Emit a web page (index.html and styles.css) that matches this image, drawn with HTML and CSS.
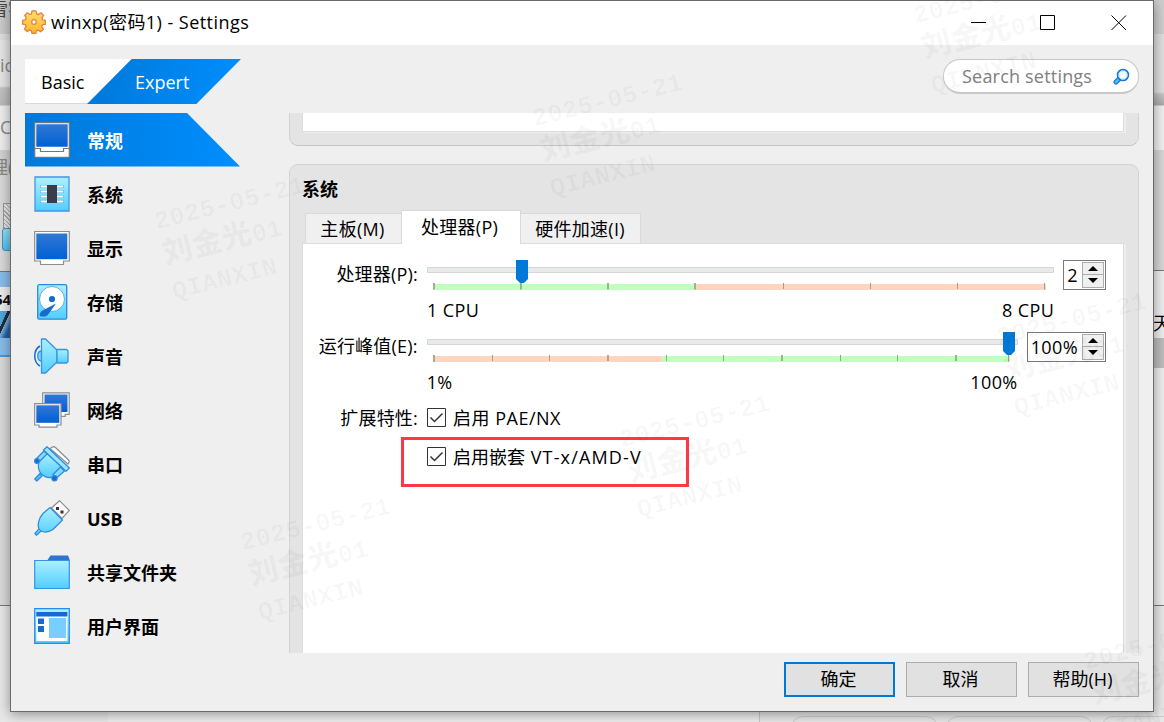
FILE: index.html
```html
<!DOCTYPE html>
<html lang="zh-CN">
<head>
    <meta charset="UTF-8">
    <meta name="viewport" content="width=device-width, initial-scale=1.0">
    <title>winxp(密码1) - Settings</title>
    <link rel="stylesheet" href="styles.css">
</head>
<body>
    <!-- windows behind the dialog -->
    <div class="back back-left">
        <span class="bt bt-1">雪字</span>
        <span class="bt bt-2">ic</span>
        <span class="bt bt-3">C</span>
        <span class="bt bt-4">理(</span>
        <div class="back-hatch"></div>
        <div class="back-cube"></div>
        <div class="back-sel"></div>
        <div class="back-logo"></div>
        <span class="bt bt-5">64</span>
    </div>
    <div class="back back-right">
        <span class="bt bt-6">天</span>
        <div class="back-gray"></div>
    </div>
    <div class="back-bottom"></div>
    <div class="back-pill pill-1"></div>
    <div class="back-pill pill-2"></div>
    <div class="back-pill pill-3"></div>

    <div class="window">
        <div class="titlebar">
            <svg class="gear" width="24" height="24" viewBox="0 0 24 24">
                <defs>
                    <linearGradient id="gold" x1="0" y1="0" x2="0" y2="1"><stop offset="0" stop-color="#ffdf70"/><stop offset="1" stop-color="#ffb52c"/></linearGradient>
                    <linearGradient id="blue" x1="0" y1="0" x2="0" y2="1"><stop offset="0" stop-color="#3078d4"/><stop offset="1" stop-color="#0060d4"/></linearGradient>
                    <linearGradient id="sky" x1="0" y1="0" x2="0" y2="1"><stop offset="0" stop-color="#acf0ff"/><stop offset="1" stop-color="#50ceff"/></linearGradient>
                </defs>
                <path d="M10 .8h4l.6 3 1.8.8 2.6-1.8 2.6 2.700-1.700 2.600.7 1.800 2.800.5v3.800l-2.900.6-.8 1.900 1.700 2.500-2.700 2.600-2.500-1.700-1.800.8-.6 2.600h-3.800l-.6-2.800-1.900-.8-2.500 1.700-2.600-2.600 1.700-2.500-.8-1.900-2.700-.5v-3.800l2.900-.6.8-1.800L2.700 5.400l2.600-2.600 2.500 1.700 1.700-.7z" fill="url(#gold)" stroke="#e8823a" stroke-width="1.300" stroke-linejoin="round"/>
                <circle cx="12" cy="12" r="2.300" fill="#fff" stroke="#d98a4a" stroke-width="1.300"/>
            </svg>
            <span class="title">winxp(密码1) - Settings</span>
            <svg class="controls" width="158" height="16" viewBox="0 0 158 16" fill="none" stroke="#000">
                <path d="M0 8.500h15M69.500 1.500h14v14h-14zM140.500 1.500l14.500 14.500M155 1.500l-14.500 14.500"/>
            </svg>
        </div>

        <div class="client">
            <div class="toolbar">
                <div class="modes">
                    <span class="mode basic">Basic</span>
                    <span class="mode expert">Expert</span>
                </div>
                <div class="search">
                    <span>Search settings</span>
                    <svg width="17" height="17" viewBox="0 0 17 17">
                        <path d="M6.300 10.700L3 14" stroke="#1976d8" stroke-width="5" stroke-linecap="round"/>
                        <path d="M6.300 10.700L3 14" stroke="#50b8fa" stroke-width="2.600" stroke-linecap="round"/>
                        <circle cx="10" cy="7" r="5.400" fill="#f4fcff" stroke="#1976d8" stroke-width="1.800"/>
                        <circle cx="10" cy="7" r="4.100" fill="none" stroke="#a4e4ff"/>
                    </svg>
                </div>
            </div>

            <div class="main">
                <div class="sidebar">
                    <div class="item active">
                        <svg width="36" height="36" viewBox="0 0 36 36">
                            <path d="M.7.700h34.600v34.600H.7z" fill="#fff" stroke="#777" stroke-width="1.200"/>
                            <path d="M2.300 2.300h31.400v22.500H2.300z" fill="url(#blue)"/>
                            <path d="M1 26.500h5.500v3h23v-3H35" fill="none" stroke="#777" stroke-width="1.200"/>
                        </svg>
                        <span>常规</span>
                    </div>
                    <div class="item">
                        <svg width="36" height="36" viewBox="0 0 36 36">
                            <path d="M1 1h34v34H1z" fill="url(#sky)" stroke="#4795df" stroke-width="1.300"/>
                            <path d="M7.500 10.500h21M7.500 15.500h21M7.500 20.500h21M7.500 25.500h21" stroke="#5fa9d0" stroke-width="3" stroke-linecap="round"/>
                            <path d="M7.500 10.500h21M7.500 15.500h21M7.500 20.500h21M7.500 25.500h21" stroke="#fff" stroke-width="1.800" stroke-linecap="round"/>
                            <path d="M13 9h10v18H13z" fill="#383d49"/>
                        </svg>
                        <span>系统</span>
                    </div>
                    <div class="item">
                        <svg width="36" height="36" viewBox="0 0 36 36">
                            <path d="M.7 1.500h34.600v29.500h-5.800v3.500h-23V31H.7z" fill="#fff" stroke="#8c8c8c" stroke-width="1.200"/>
                            <path d="M2.300 3.500h31v25.700h-31z" fill="url(#blue)"/>
                        </svg>
                        <span>显示</span>
                    </div>
                    <div class="item">
                        <svg width="36" height="36" viewBox="0 0 36 36">
                            <rect x="3.700" y=".7" width="29" height="34.500" rx="1.500" fill="url(#sky)" stroke="#2f88dc" stroke-width="1.300"/>
                            <circle cx="18" cy="15" r="12.500" fill="#fff" stroke="#5aaee8" stroke-width="1"/>
                            <circle cx="18" cy="15" r="3.100" fill="#126dd1"/>
                            <path d="M22 19.500L8.500 26.500c-4 3-3.500 6.500 0 6 2.500.3 4.500-.5 6-2.500z" fill="#176bd0"/>
                        </svg>
                        <span>存储</span>
                    </div>
                    <div class="item">
                        <svg width="36" height="36" viewBox="0 0 36 36" stroke="#3794df" stroke-width="1.300">
                            <path d="M7.500 13c-5 0-5 10 0 10z" fill="#79d9fc"/>
                            <path d="M6 8C-1 12-1 24 6 28" fill="none" stroke="#176bd0" stroke-width="1.500"/>
                            <path d="M7.500 1h4L23 12v12L11.500 35h-4z" fill="url(#sky)"/>
                            <path d="M23 11.500h9.500l1.500 1.500v10.500l-1.500 1.500H23z" fill="url(#sky)"/>
                        </svg>
                        <span>声音</span>
                    </div>
                    <div class="item">
                        <svg width="36" height="36" viewBox="0 0 36 36">
                            <path d="M8.700.8h26.500v21.500h-4v2H8.700z" fill="#fff" stroke="#8c8c8c" stroke-width="1.200"/>
                            <path d="M10.500 2.500H33.500V20H10.500z" fill="url(#blue)"/>
                            <path d="M.7 11.700h26.300V33h-4v2.200H5V33H.7z" fill="#fff" stroke="#8c8c8c" stroke-width="1.200"/>
                            <path d="M2.300 13.300h23v17.500h-23z" fill="url(#blue)"/>
                        </svg>
                        <span>网络</span>
                    </div>
                    <div class="item">
                        <svg width="36" height="36" viewBox="0 0 36 36" stroke="#2e88df" stroke-width="1.200" stroke-linejoin="round">
                            <path d="M16 2.500l3-1.800c1 0 2 .3 3 1.300L34.500 14c1 1 .8 2.500-.5 4z" fill="#fff" stroke="#8c8c8c"/>
                            <path d="M6 27.500L.8 33l2 2L8 30z" fill="#50c8fa"/>
                            <path d="M12.500 7L5 14.500c-1.500 6-1 9.500 2 13 4 4 9 5 14 3L29 22z" fill="url(#sky)"/>
                            <path d="M10 5L2.500 12.500l3 3L13 8zM26.500 21L19 28.500l3.500 3.500L30.500 25z" fill="#84dafa"/>
                            <path d="M9.500 4L13 .7 35.300 22 32 25.300z" fill="#9ae6ff"/>
                            <circle cx="3" cy="15" r="2.400" fill="#176bd0"/><circle cx="20.500" cy="32.300" r="2.600" fill="#176bd0"/>
                        </svg>
                        <span>串口</span>
                    </div>
                    <div class="item">
                        <svg width="36" height="36" viewBox="0 0 36 36">
                            <path d="M17.500 8L25.500.7 35.300 10.500 28 18.500z" fill="#fff" stroke="#8c8c8c" stroke-width="1.200"/>
                            <path d="M22 7h3v3h-3zM26.500 10.500h3v3h-3z" fill="#333"/>
                            <path d="M16 7.500L28.500 20 19 29.500C15 32 10 32.500 7 31L2.500 35.300.8 33.500 5 29c-2-4 0-11 4-15.500z" fill="url(#sky)" stroke="#2e88df" stroke-width="1.200"/>
                            <path d="M5 29l2.500 2" stroke="#2e88df"/>
                        </svg>
                        <span>USB</span>
                    </div>
                    <div class="item">
                        <svg width="36" height="36" viewBox="0 0 36 36">
                            <path d="M13.500 6l3-4.500h17.500L35.500 5v2h-22z" fill="#2e75d2"/>
                            <path d="M.7 6.500h34.600v28H.7z" fill="url(#sky)" stroke="#3793e6" stroke-width="1.200"/>
                        </svg>
                        <span>共享文件夹</span>
                    </div>
                    <div class="item">
                        <svg width="36" height="36" viewBox="0 0 36 36">
                            <path d="M.7.700h34.600v34.600H.7z" fill="url(#sky)" stroke="#238be8" stroke-width="1.200"/>
                            <path d="M2.300 8h31v25h-31z" fill="#fff"/>
                            <path d="M2.300 4h31v4.500h-31zM4 10.500h6v5.500H4zM4 18h6v6H4z" fill="#146bd2"/>
                            <path d="M15 10h17v20H15z" fill="#78cfff"/>
                        </svg>
                        <span>用户界面</span>
                    </div>
                </div>

                <div class="scroll-area">
                    <div class="group group-prev">
                        <div class="pane pane-prev"></div>
                    </div>
                    <div class="group group-system">
                        <div class="group-title">系统</div>
                        <div class="tabs">
                            <span class="tab tab-board">主板(M)</span>
                            <span class="tab tab-cpu selected">处理器(P)</span>
                            <span class="tab tab-accel">硬件加速(I)</span>
                        </div>
                        <div class="pane">
                            <div class="row">
                                <span class="label">处理器(P):</span>
                                <div class="slider">
                                    <svg width="627" height="32" viewBox="0 0 627 32">
                                        <path d="M.5 7.500h626v5H.5z" fill="#e7eaea" stroke="#d6d6d6"/>
                                        <path d="M6 24h263v6H6z" fill="#c1ffc1"/>
                                        <path d="M269 24h350v6H269z" fill="#ffd5c1"/>
                                        <path d="M7 23v6.500M94 23v6.500M181 23v6.500M268 23v6.500" stroke="#a0a08c" stroke-width="1.700"/>
                                        <path d="M356.500 23v6M443.500 23v6M530.500 23v6M617.500 23v6.500" stroke="#a0a08c"/>
                                        <path d="M89 0h12v19l-4 4h-4l-4-4z" fill="#0078d7"/>
                                    </svg>
                                    <div class="range"><span>1 CPU</span><span>8 CPU</span></div>
                                </div>
                                <div class="spin">
                                    <span>2</span>
                                    <div class="arrows"><i class="up"></i><i class="down"></i></div>
                                </div>
                            </div>
                            <div class="row">
                                <span class="label">运行峰值(E):</span>
                                <div class="slider">
                                    <svg width="591" height="32" viewBox="0 0 591 32">
                                        <path d="M.5 7.500h590v5H.5z" fill="#e7eaea" stroke="#d6d6d6"/>
                                        <path d="M6 24h229v6H6z" fill="#ffd5c1"/>
                                        <path d="M235 24h348v6H235z" fill="#c1ffc1"/>
                                        <path d="M7 23v7M181 23v6M355 23v6M529 23v6" stroke="#a0a08c" stroke-width="1.700"/>
                                        <path d="M65.500 23v6M122.500 23v6M239.500 23v6M296.500 23v6M413.500 23v6M470.500 23v6M581.500 23v6.500" stroke="#a0a08c"/>
                                        <path d="M576 0h12v19l-4 4h-4l-4-4z" fill="#0078d7"/>
                                    </svg>
                                    <div class="range"><span>1%</span><span>100%</span></div>
                                </div>
                                <div class="spin">
                                    <span>100%</span>
                                    <div class="arrows"><i class="up"></i><i class="down"></i></div>
                                </div>
                            </div>
                            <div class="row row-check">
                                <span class="label">扩展特性:</span>
                                <svg width="19" height="19" viewBox="0 0 19 19" fill="none" stroke="#333"><path d="M.5.500h18v18H.5z"/><path d="M3.500 9.500l4 4L15.500 5.500" stroke-width="1.500"/></svg>
                                <span class="pae">启用 PAE/NX</span>
                            </div>
                            <div class="row row-check">
                                <span class="label"></span>
                                <svg width="19" height="19" viewBox="0 0 19 19" fill="none" stroke="#333"><path d="M.5.500h18v18H.5z"/><path d="M3.500 9.500l4 4L15.500 5.500" stroke-width="1.500"/></svg>
                                <span class="vtx">启用嵌套 <span>VT-x/AMD-V</span></span>
                            </div>
                            <div class="highlight"></div>
                        </div>
                    </div>
                </div>
            </div>

            <div class="footer">
                <button class="btn default">确定</button>
                <button class="btn">取消</button>
                <button class="btn">帮助(H)</button>
            </div>
        </div>
    </div>

    <!-- watermark -->
    <div class="mark m1">2025-05-21<br><b>刘金光</b>01<br>QIANXIN</div>
    <div class="mark m2">2025-05-21<br><b>刘金光</b>01<br>QIANXIN</div>
    <div class="mark m3">2025-05-21<br><b>刘金光</b>01<br>QIANXIN</div>
    <div class="mark m4">2025-05-21<br><b>刘金光</b>01<br>QIANXIN</div>
    <div class="mark m5">2025-05-21<br><b>刘金光</b>01<br>QIANXIN</div>
    <div class="mark m6">2025-05-21<br><b>刘金光</b>01<br>QIANXIN</div>
    <div class="mark m7">2025-05-21<br><b>刘金光</b>01<br>QIANXIN</div>
</body>
</html>
```
FILE: styles.css
```css
* {
    box-sizing: border-box;
}

body {
    position: relative;
    margin: 0;
    width: 1164px;
    height: 722px;
    overflow: hidden;
    background-color: #e8e8e8;
    color: #000;
    font-family: "Open Sans", "Noto Sans CJK SC", sans-serif;
    font-size: 18px;
    line-height: 24px;
}

svg {
    display: block;
    flex: none;
}

/* windows behind */
.back {
    position: absolute;
    top: 0;
    height: 606px;
    overflow: hidden;
    border-bottom: 1px solid #777;
}

.back-left {
    left: 0;
    width: 11px;
    background: linear-gradient(#cbcbcb 34px, #dfdfdf 34px, #dfdfdf 40px, #e6e6e6 40px, #e6e6e6 86px, #c4c4c4 88px, #b9b9b9 105px, #eee 106px, #eee 150px, #d2d2d2 150px, #d2d2d2 173px, #dadada 173px);
}

.back-right {
    left: 1153px;
    width: 11px;
    background: linear-gradient(#cfcfcf 34px, #dfdfdf 34px, #dfdfdf 92px, #c5c5c5 94px, #aaa 105px, #f0f0f0 106px, #f0f0f0 150px, #d7d7d7 150px, #d7d7d7 270px, #777 270px, #777 271px, #eee 271px);
}

.bt {
    position: absolute;
    color: #888;
    white-space: nowrap;
}

.bt-1 { left: -10px; top: -3px; color: #444; }
.bt-2 { left: 0; top: 53px; }
.bt-3 { left: 0; top: 115px; }
.bt-4 { left: -10px; top: 155px; }
.bt-5 { left: -6px; top: 287px; width: 20px; font-size: 15px; font-weight: bold; color: #111; background: #eee; }
.bt-6 { left: 0; top: 311px; color: #000; }

.back-hatch {
    position: absolute;
    left: 3px;
    top: 203px;
    width: 9px;
    height: 26px;
    border: 1px solid #999;
    background: repeating-linear-gradient(45deg, #aaa 0 1px, #e8e8e8 1px 3px);
}

.back-cube {
    position: absolute;
    left: 2px;
    top: 228px;
    width: 12px;
    height: 23px;
    border: 1px solid #3b95c8;
    border-radius: 3px;
    background: linear-gradient(#9be0f4, #4fc0ea);
}

.back-sel {
    position: absolute;
    left: 0;
    top: 271px;
    width: 11px;
    height: 86px;
    border-top: 1px solid #777;
    border-bottom: 2px solid #4a9bd8;
    background: #8abdeb;
}

.back-logo {
    position: absolute;
    left: 0;
    top: 308px;
    width: 11px;
    height: 30px;
    background: linear-gradient(115deg, #4fa6dc 35%, #222c3b 36%, #222c3b 48%, #7eb0df 50%, #24609f 75%);
}

.back-gray {
    position: absolute;
    left: 0;
    top: 338px;
    width: 11px;
    height: 30px;
    background: #bdbdbd;
}

.back-bottom {
    position: absolute;
    left: 108px;
    top: 711px;
    width: 652px;
    height: 11px;
    border-right: 1px solid #c8c8c8;
    background: #eee;
}

.back-pill {
    position: absolute;
    top: 716px;
    width: 147px;
    height: 30px;
    border: 1px solid #ccc;
    border-radius: 12px;
}

.pill-1 { left: 791px; }
.pill-2 { left: 946px; }
.pill-3 { left: 1101px; }

/* dialog */
.window {
    position: relative;
    margin-left: 10px;
    width: 1144px;
    height: 712px;
    border: 1px solid #6b6b6b;
    background-color: #efefef;
    box-shadow: 0 2px 12px rgba(0, 0, 0, 0.4);
}

.titlebar {
    display: flex;
    align-items: center;
    height: 44px;
    padding: 0 24px 2px 11px;
    background-color: #fff;
}

.title {
    flex: 1;
    margin-left: 5px;
    letter-spacing: 0.45px;
    white-space: nowrap;
}

.client {
    padding: 14px 14px 0;
}

.toolbar {
    display: flex;
    justify-content: space-between;
    height: 45px;
    margin-bottom: 9px;
}

.modes {
    display: flex;
}

.mode {
    height: 45px;
    line-height: 46px;
}

.basic {
    width: 124px;
    padding-left: 16px;
    border-bottom: 1px solid #d8d8d8;
    background-color: #fff;
}

.expert {
    width: 154px;
    margin-left: -62px;
    padding-left: 48px;
    color: #fff;
    background: linear-gradient(100deg, #0078d7, #008eff);
    clip-path: polygon(29% 0, 100% 0, 71% 100%, 0 100%);
}

.search {
    display: flex;
    align-items: center;
    justify-content: space-between;
    width: 196px;
    height: 35px;
    padding: 0 8px 0 18px;
    border: 1px solid #c8c8c8;
    border-bottom-width: 2px;
    border-radius: 17px;
    background-color: #fff;
    color: #808080;
    letter-spacing: 0.2px;
}

.main {
    display: flex;
    height: 540px;
}

.sidebar {
    width: 264px;
}

.item {
    display: flex;
    align-items: center;
    gap: 17px;
    width: 215px;
    height: 54px;
    padding: 0 0 0 9px;
    font-weight: bold;
}

.item span {
    padding-top: 1px;
}

.active {
    color: #fff;
    background: linear-gradient(100deg, #0078d7, #008eff);
    clip-path: polygon(0 0, 162px 0, 100% 53.5px, 0 53.5px);
}

.scroll-area {
    flex: 1;
    overflow: hidden;
}

.group {
    border: 1px solid #d3d3d3;
    background-color: #e4e4e4;
}

.group-prev {
    height: 33px;
    margin-bottom: 18px;
    padding: 0 14px 0 12px;
    border-top: 0;
    border-bottom-color: #c4c4c4;
    border-radius: 0 0 9px 9px;
}

.group-system {
    height: 600px;
    padding: 0 14px 0 12px;
    border-radius: 9px 9px 0 0;
}

.group-title {
    height: 45px;
    padding-top: 12px;
    font-weight: bold;
}

.tabs {
    display: flex;
    align-items: flex-end;
    height: 34px;
    padding-left: 3px;
}

.tab {
    height: 31px;
    border: 1px solid #d9d9d9;
    background-color: #f0f0f0;
    line-height: 31px;
    text-align: center;
    letter-spacing: 0.3px;
    white-space: nowrap;
}

.tab-board {
    width: 96px;
    padding-right: 2px;
    border-right: 0;
}

.tab-cpu {
    z-index: 1;
    width: 120px;
    height: 34px;
    padding-right: 3px;
    border-bottom: 0;
    background-color: #fff;
    line-height: 33px;
}

.tab-accel {
    width: 120px;
    padding-right: 1px;
    border-left: 0;
}

.pane {
    position: relative;
    height: 500px;
    margin-top: -1px;
    padding: 16px 17px 0 0;
    border: 1px solid #dcdcdc;
    box-shadow: 2px 1px 0 #eee;
    background-color: #fff;
}

.pane-prev {
    height: 19px;
    margin-top: 0;
    border-top: 0;
}

.row {
    display: flex;
    align-items: flex-start;
    gap: 9px;
    height: 72px;
}

.label {
    width: 115px;
    padding-top: 2px;
    letter-spacing: 0.2px;
    text-align: right;
    white-space: nowrap;
}

.slider {
    flex: 1;
}

.range {
    display: flex;
    justify-content: space-between;
    padding-top: 6px;
    letter-spacing: 0.4px;
}

.spin {
    display: flex;
    align-items: center;
    justify-content: space-between;
    height: 30px;
    padding: 0 1px 0 3px;
    border: 1px solid #7a7a7a;
    background-color: #fff;
    letter-spacing: 0.4px;
}

.spin > span {
    padding-right: 4px;
}

.arrows {
    width: 22px;
    height: 26px;
    border: 1px solid #adadad;
    background-color: #f0f0f0;
}

.arrows i {
    display: block;
    height: 12px;
}

.up {
    border-bottom: 1px solid #adadad;
}

.arrows i::before {
    content: "";
    display: block;
    width: 10px;
    height: 5px;
    margin: 0 auto;
    background-color: #000;
    position: relative;
    top: 3px;
    clip-path: polygon(50% 0, 100% 100%, 0 100%);
}

.arrows .down::before {
    clip-path: polygon(0 0, 100% 0, 50% 100%);
}

.row-check {
    align-items: center;
    height: 39px;
    margin-top: -6px;
    margin-bottom: 6px;
    gap: 7px;
}

.row-check .label {
    margin-right: 2px;
    padding-top: 0;
}

.pae {
    letter-spacing: 0.5px;
}

.vtx span {
    margin-left: 1px;
    letter-spacing: 1.15px;
}

.highlight {
    position: absolute;
    left: 98px;
    top: 193px;
    width: 288px;
    height: 50px;
    border: 3px solid #fd3746;
}

.footer {
    display: flex;
    justify-content: flex-end;
    gap: 11px;
    padding: 9px 0 0;
}

.btn {
    width: 111px;
    height: 35px;
    padding: 0 2px 2px 0;
    border: 1px solid #adadad;
    background-color: #e1e1e1;
    color: #000;
    font: inherit;
}

.default {
    border: 2px solid #0078d7;
}

.mark {
    position: absolute;
    transform: rotate(-14deg);
    transform-origin: 0 0;
    color: rgba(0, 0, 0, 0.035);
    font-family: "Liberation Mono", "Noto Sans CJK SC", monospace;
    font-size: 25px;
    font-weight: bold;
    letter-spacing: 0.4px;
    line-height: 36px;
    white-space: nowrap;
    pointer-events: none;
}

.mark b {
    font-size: 30px;
    line-height: 30px;
}

.m1 { left: 529px; top: 103px; }
.m2 { left: 151px; top: 206px; }
.m3 { left: 910px; top: 0; }
.m4 { left: 993px; top: 322px; }
.m5 { left: 616px; top: 424px; }
.m6 { left: 237px; top: 527px; }
.m7 { left: 1080px; top: 646px; }
```
